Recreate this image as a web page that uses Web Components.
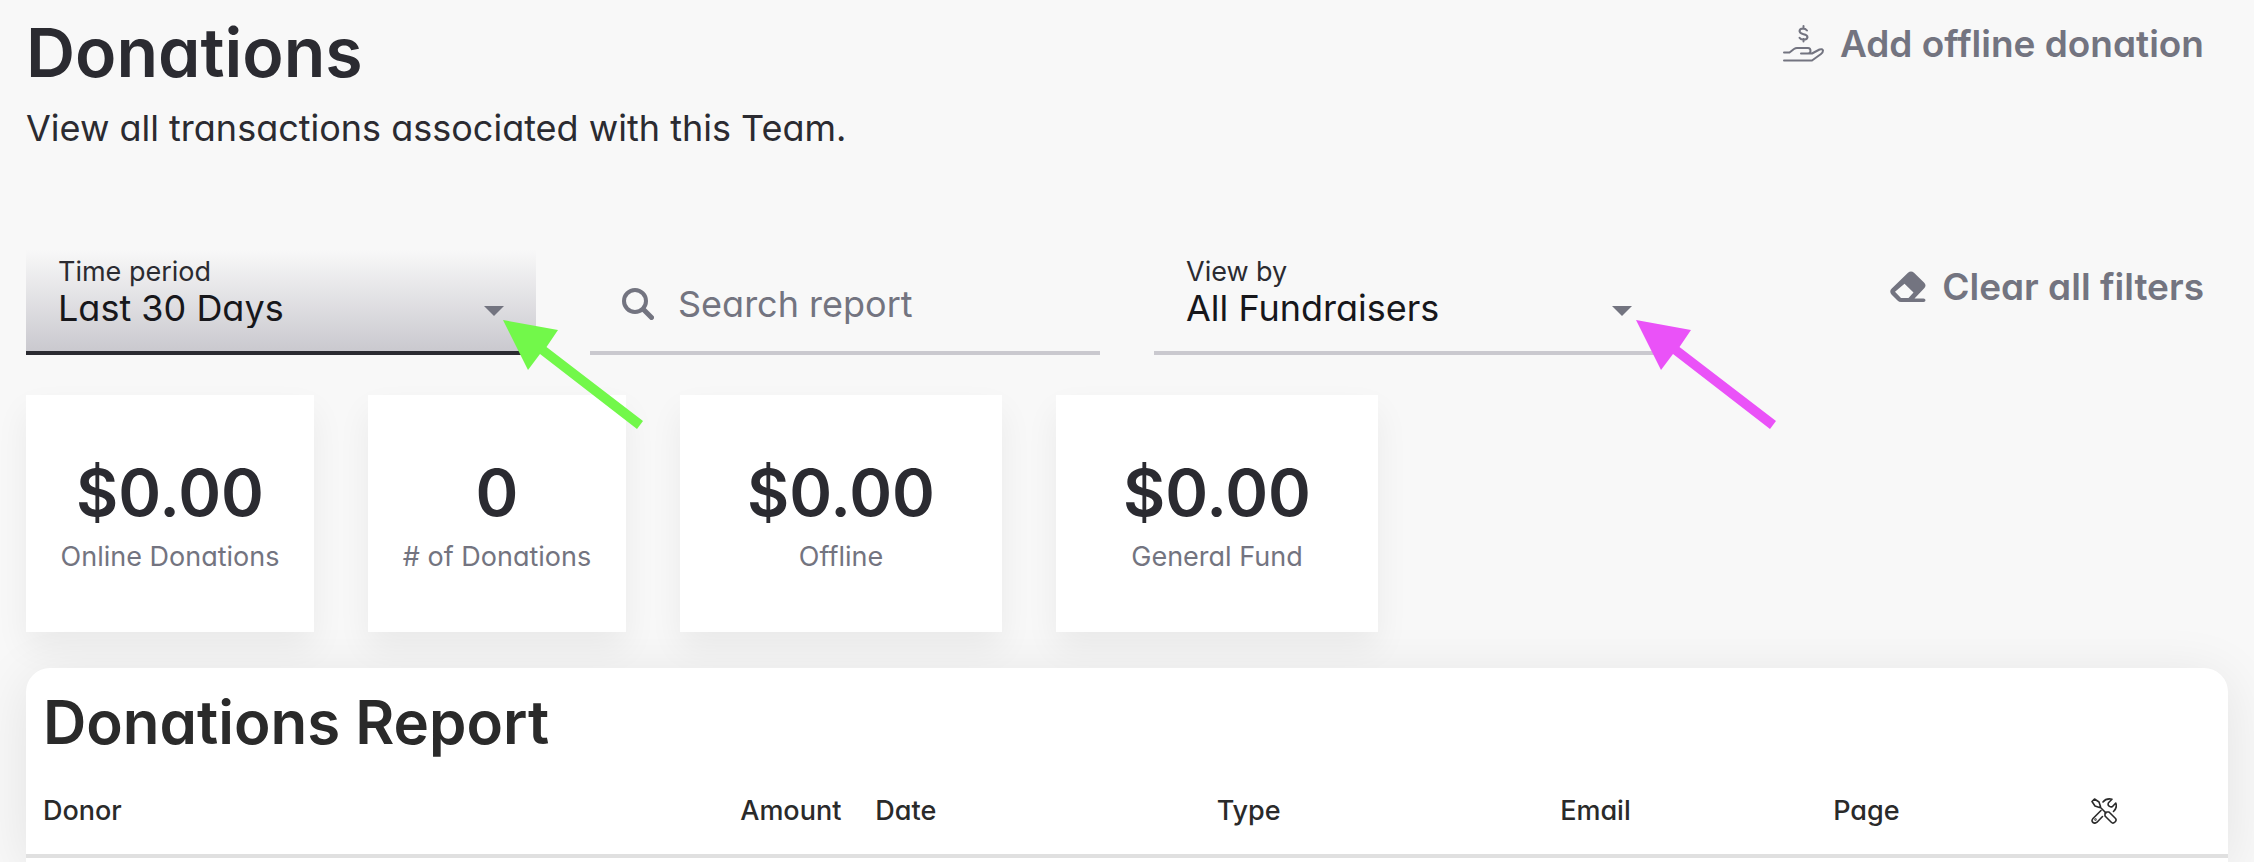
<!DOCTYPE html>
<html lang="en">
<head>
<meta charset="utf-8">
<meta name="viewport" content="width=device-width, initial-scale=1">
<title>Donations</title>
<style>
  body {
    margin: 0;
    background: #f8f8f8;
    color: #2b2b31;
    font-family: Inter, "Noto Sans", sans-serif;
    font-feature-settings: "cv11";
    --muted: #737480;
    --line: #cac9cf;
    --ink: #2b2b31;
  }
</style>
</head>
<body>
<donations-page></donations-page>

<script>
const define = (name, html, setup) => {
  const template = document.createElement('template');
  template.innerHTML = html;
  customElements.define(name, class extends HTMLElement {
    constructor() {
      super();
      this.attachShadow({ mode: 'open' }).append(template.content.cloneNode(true));
    }
    connectedCallback() {
      if (setup) setup(this, this.shadowRoot);
    }
  });
};

define('text-action', `
  <style>
    :host { display: block; }
    button {
      display: flex; align-items: center; gap: 16px;
      margin: 0; padding: 0 24px 0 0; border: 0; background: none;
      color: var(--muted); font: inherit; font-size: 37px; line-height: 48px; font-weight: 600;
      font-feature-settings: inherit; white-space: nowrap; cursor: pointer;
    }
  </style>
  <button type="button"><slot name="icon"></slot><span><slot></slot></span></button>
`);

define('page-header', `
  <style>
    :host { display: flex; justify-content: space-between; align-items: flex-start; }
    h1 { margin: 0 0 12px; font-size: 68px; line-height: 80px; font-weight: 600; }
    p { margin: 0; font-size: 36px; line-height: 48px; }
    .actions { padding-top: 8px; }
  </style>
  <div>
    <h1><slot name="title"></slot></h1>
    <p><slot name="subtitle"></slot></p>
  </div>
  <div class="actions"><slot name="actions"></slot></div>
`);

define('select-field', `
  <style>
    :host { display: block; position: relative; }
    .field {
      position: relative; box-sizing: border-box; height: 105px;
      padding: 6px 32px 23px; border-bottom: 4px solid var(--line);
    }
    :host([active]) .field {
      background: linear-gradient(#f8f8f8, #cac9cf);
      border-color: var(--ink);
    }
    label { display: block; font-size: 27px; line-height: 32px; }
    select {
      display: block; width: 100%; height: 40px; margin: 0; padding: 0; border: 0; outline: 0;
      appearance: none; background: none; color: #17171b;
      font: inherit; font-size: 36px; line-height: 40px; font-feature-settings: inherit;
    }
    .caret { position: absolute; right: 32px; top: 56px; pointer-events: none; }
    ::slotted(pointer-arrow) { position: absolute; left: 100%; top: 70px; margin-left: var(--arrow-shift, -33px); z-index: 2; }
  </style>
  <div class="field">
    <label for="value"></label>
    <select id="value"><option></option></select>
    <svg class="caret" width="20" height="10" viewBox="0 0 20 10" aria-hidden="true"><path d="M0 0h20L10 10z" fill="#737480"/></svg>
  </div>
  <slot></slot>
`, (host, root) => {
  root.querySelector('label').textContent = host.getAttribute('label');
  root.querySelector('option').textContent = host.getAttribute('value');
});

define('search-field', `
  <style>
    :host { display: block; }
    label {
      display: flex; align-items: center; gap: 24px; box-sizing: border-box; height: 105px;
      padding: 6px 32px 0; border-bottom: 4px solid var(--line);
    }
    svg { flex: none; }
    input {
      flex: 1; min-width: 0; height: 48px; margin: 0; padding: 0; border: 0; outline: 0; background: none;
      color: var(--ink); font: inherit; font-size: 36px; line-height: 48px; font-feature-settings: inherit;
    }
    input::placeholder { color: var(--muted); opacity: 1; }
  </style>
  <label>
    <svg width="32" height="32" viewBox="0 0 32 32" fill="none" stroke="#737480" stroke-linecap="round" aria-hidden="true">
      <circle cx="13" cy="13" r="11" stroke-width="4"/><path d="M21.500 21.500L29.500 29.500" stroke-width="5"/>
    </svg>
    <input type="search" placeholder="Search report" aria-label="Search report">
  </label>
`);

define('pointer-arrow', `
  <style>
    :host { display: block; pointer-events: none; }
    svg { display: block; }
  </style>
  <svg width="140" height="109" viewBox="0 0 140 109" aria-hidden="true">
    <path d="M0 0L55 10L43.500 27L140 101L134 109L37 34L25 50z" fill="currentColor"/>
  </svg>
`);

define('stat-card', `
  <style>
    :host {
      display: flex; flex-direction: column; align-items: center; gap: 8px; box-sizing: border-box;
      padding: 58px 20px 59px; background: #fff; text-align: center;
      box-shadow: 0 16px 32px rgba(0, 0, 0, .06);
    }
    strong { font-size: 65px; line-height: 80px; font-weight: 600; }
    span { color: var(--muted); font-size: 27px; line-height: 32px; white-space: nowrap; }
  </style>
  <strong><slot></slot></strong>
  <span><slot name="label"></slot></span>
`);

define('donations-report', `
  <style>
    :host {
      display: block; background: #fff; color: #2a2a2a; border-radius: 24px 24px 0 0;
      box-shadow: 0 8px 56px rgba(0, 0, 0, .09);
    }
    h2 { margin: 0; padding: 18px 17px 0; font-size: 60px; line-height: 72px; font-weight: 600; }
    table { width: 100%; table-layout: fixed; border-collapse: separate; border-spacing: 0; }
    th {
      padding: 37px 17px 27px; border-bottom: 4px solid #e0e0e0;
      font-size: 27px; line-height: 32px; font-weight: 500; text-align: left; white-space: nowrap;
    }
    .amount { text-align: right; }
    svg { display: block; }
  </style>
  <h2>Donations Report</h2>
  <table>
    <colgroup>
      <col style="width:22%"><col style="width:15.800%"><col style="width:15.500%"><col style="width:15.600%">
      <col style="width:12.400%"><col style="width:11.700%"><col>
    </colgroup>
    <thead>
      <tr>
        <th scope="col">Donor</th><th scope="col" class="amount">Amount</th><th scope="col">Date</th>
        <th scope="col">Type</th><th scope="col">Email</th><th scope="col">Page</th>
        <th scope="col" aria-label="Tools">
          <svg width="26" height="26" viewBox="0 0 26 26" fill="none" stroke="#2a2a2a" stroke-width="1.600" stroke-linejoin="round" stroke-linecap="round" aria-hidden="true">
            <path d="M1 3.500L3.500 1L8 4L9.500 8.500L8.500 9.500L4 8z"/>
            <path d="M9 9L15 15"/>
            <path d="M14 16Q14 14 16 14L18 14L24.300 20.300Q26 22 24 24Q22 26 20.300 24.300L14 18z"/>
            <path d="M12 4Q15 0 21 1.200L17.500 4.700Q16.500 7 18 8Q19.500 9.500 21.500 8.500L24.800 5Q26.500 10 22.500 13.500"/>
            <path d="M10 12.500L2 20.500Q0 23 2 24.500Q4 26 6 24.200L11.500 18.500"/>
            <circle cx="4.500" cy="21.500" r=".4"/>
          </svg>
        </th>
      </tr>
    </thead>
  </table>
`);

define('donations-page', `
  <style>
    :host { display: flex; flex-direction: column; box-sizing: border-box; min-height: 100vh; padding: 12px 26px 0; }
    .filters {
      display: grid; grid-template-columns: repeat(3, minmax(0, 510px)) 1fr; column-gap: 54px;
      align-items: start; margin-top: 98px;
    }
    .clear { justify-self: end; margin-top: 13px; }
    .green { color: #72f84a; }
    .pink { color: #ea52f8; --arrow-shift: -28px; }
    .stats { display: flex; gap: 54px; margin-top: 40px; }
    .stats stat-card { flex: 0 1 322px; }
    .stats .online { flex-basis: 288px; }
    .stats .count { flex-basis: 258px; }
    donations-report { flex: 1; margin-top: 36px; }
    svg { display: block; }
  </style>
  <page-header>
    <span slot="title">Donations</span>
    <span slot="subtitle">View all transactions associated with this Team.</span>
    <text-action slot="actions">
      <svg slot="icon" width="41" height="38" viewBox="0 0 41 38" fill="none" stroke="#737480" stroke-width="2" stroke-linecap="round" stroke-linejoin="round" aria-hidden="true">
        <path d="M20.500 1v2.500M20.500 14v2.500M24 5.500Q22.500 3.500 20 3.500Q16.500 3.700 16.500 6.200Q16.800 8.500 20.500 9.200Q24.500 10 24.500 12.200Q24 14.700 20.500 14.700Q17.500 14.600 16.500 12.800"/>
        <path d="M1 27.500H6.500L11 24Q12.500 23 14 23H25Q27.500 23 27.500 26Q27.500 28.500 24.500 28.500H18M25 28.500H29L36.500 24.500Q39.500 23.500 40 25.500Q40 27.500 38 29L29 35.500H1"/>
      </svg>
      Add offline donation
    </text-action>
  </page-header>

  <section class="filters" aria-label="Filters">
    <select-field label="Time period" value="Last 30 Days" active><pointer-arrow class="green"></pointer-arrow></select-field>
    <search-field></search-field>
    <select-field label="View by" value="All Fundraisers"><pointer-arrow class="pink"></pointer-arrow></select-field>
    <text-action class="clear">
      <svg slot="icon" width="36" height="32" viewBox="0 0 36 32" aria-hidden="true">
        <path fill="#737480" fill-rule="evenodd" d="M18 1.800Q21 -.8 24 1.800L34 11.500Q37 14.500 34 17.500L24.500 27.500H33.500Q35.500 27.700 35.500 29.300Q35.500 31 33.500 31H11Q9 31 7.500 29.500L1.500 23.500Q-1 20.500 1.500 17.800ZM14.500 12.800L5 20.800L11 27H18.500L23.500 21.500Z"/>
      </svg>
      Clear all filters
    </text-action>
  </section>

  <section class="stats" aria-label="Totals">
    <stat-card class="online">$0.00<span slot="label">Online Donations</span></stat-card>
    <stat-card class="count">0<span slot="label"># of Donations</span></stat-card>
    <stat-card>$0.00<span slot="label">Offline</span></stat-card>
    <stat-card>$0.00<span slot="label">General Fund</span></stat-card>
  </section>

  <donations-report></donations-report>
`);
</script>
</body>
</html>
